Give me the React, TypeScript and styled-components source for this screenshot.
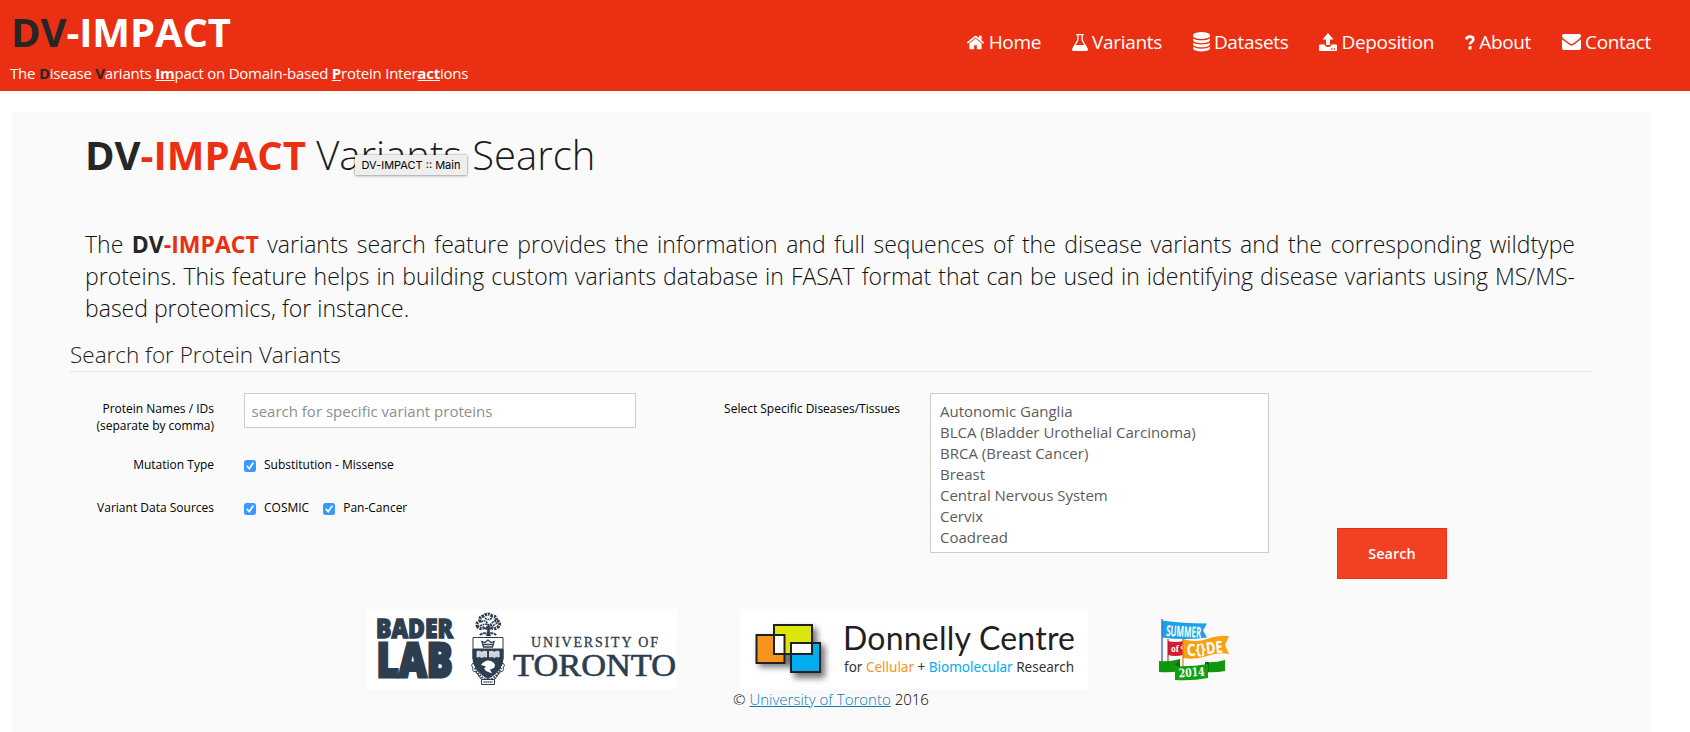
import React from "react";
import styled, { createGlobalStyle } from "styled-components";

const Global = createGlobalStyle`
  * { box-sizing: border-box; }
  body { margin: 0; background: #fff; color: #222; font-family: "Open Sans", sans-serif; overflow: hidden; }
`;

const Page = styled.div`height: 732px; overflow: hidden; position: relative;`;

const Header = styled.header`
  height: 91px;
  background: #eb2f12;
  color: #fff;
  display: flex;
  justify-content: space-between;
  padding: 0 39px 0 10px;
`;
const Brand = styled.div`display: flex; flex-direction: column; padding-top: 5px;`;
const Logo = styled.div`
  font-size: 40px; line-height: 54px; font-weight: 700; padding-left: 1px;
  letter-spacing: -0.1px; white-space: nowrap;
`;
const Dark = styled.b`color: #262626; font-weight: 700;`;
const Red = styled.b`color: #eb2f12; font-weight: 700;`;
const Tagline = styled.div`
  font-size: 15px; line-height: 22px; margin-top: 3px; letter-spacing: -0.23px; white-space: nowrap;
  u { font-weight: 700; }
`;
const Nav = styled.nav`display: flex; align-items: center; height: 84px; gap: 31px;`;
const NavItem = styled.a`
  display: flex; align-items: center; gap: 4px;
  font-size: 19px; line-height: 26px; letter-spacing: -0.33px; white-space: nowrap;
  svg { display: block; fill: #fff; }
`;

const Panel = styled.main`
  margin: 21px 39px 0 11px;
  height: 620px;
  background: #fafafa;
  padding: 16px 60px 0 59px;
`;
const Title = styled.h1`
  margin: 0 0 0 15px; font-size: 40px; line-height: 54px; font-weight: 300; color: #1c1c1c;
`;
const Intro = styled.p`
  margin: 46px 16px 0 15px; font-size: 23px; line-height: 32px; font-weight: 300; text-align: justify; color: #111;
`;
const Legend = styled.h2`
  margin: 12px 0 0; height: 36px; font-size: 22.5px; line-height: 37px; font-weight: 300;
  border-bottom: 1px solid #e5e5e5; color: #222;
`;
const Form = styled.form`display: flex; padding-top: 21px; height: 237px;`;
const Fields = styled.div`display: flex; flex-direction: column; width: 566px;`;
const Row = styled.div<{ $h: number }>`display: flex; height: ${(p) => p.$h}px;`;
const Label = styled.label<{ $w: number }>`
  width: ${(p) => p.$w}px; text-align: right; font-size: 12px; line-height: 17px; padding-top: 7px;
  color: #000; white-space: nowrap; flex: none;
`;
const TextInput = styled.input`
  margin-left: 30px; width: 392px; height: 35px; border: 1px solid #ccc; background: #fff; outline: none;
  padding: 0 6.5px; font: 15px "Open Sans", sans-serif;
  &::placeholder { color: #8e8e8e; opacity: 1; }
`;
const Checks = styled.div`display: flex; margin-left: 30px; gap: 14px;`;
const CheckLabel = styled.label`
  display: flex; font-size: 12px; line-height: 17px; padding-top: 7px; gap: 8px; color: #000; white-space: nowrap;
  svg { margin-top: 4px; display: block; }
`;
const ListBox = styled.div`
  margin-left: 30px; width: 339px; height: 160px; border: 1px solid #ccc; background: #fff;
  padding: 7px 9px; font-size: 15px; line-height: 21px; color: #5c5c5c; overflow: hidden; white-space: nowrap;
`;
const SearchButton = styled.button`
  margin: 135px 0 0 68px; width: 110px; height: 51px; border: 1px solid #eb2f12; background: #f24024; color: #fff;
  font: 600 14.5px "Open Sans", sans-serif; padding: 0;
`;
const Logos = styled.div`
  display: flex; margin: 0 0 0 297px; height: 80px;
  svg { display: block; flex: none; overflow: visible; }
`;
const Copyright = styled.div`
  margin-left: 663px; font-size: 15px; line-height: 21px; font-weight: 300; color: #000; white-space: nowrap;
  a { color: #0b7fb4; text-decoration: underline; }
`;
const Tooltip = styled.div`
  position: absolute; left: 355px; top: 155px; width: 112px; height: 20px; background: #eee;
  box-shadow: 0 0 2px rgba(0,0,0,.35), 0 1px 3px rgba(0,0,0,.25); color: #000;
  font: 11px/20px Inter, sans-serif; text-align: center; white-space: nowrap;
`;

const Check = () => (
  <svg width="12" height="12" viewBox="0 0 12 12">
    <rect width="12" height="12" rx="2.5" fill="#3b99fc" />
    <path d="M3.2 6.3 5.2 8.7 8.9 3.2" fill="none" stroke="#fff" strokeWidth="1.6" strokeLinecap="round" />
  </svg>
);

const HomeIcon = () => (
  <svg width="19" height="19" viewBox="0 0 1792 1792">
    <path d="M1472 992v480q0 26-19 45t-45 19h-384v-384h-256v384h-384q-26 0-45-19t-19-45v-480q0-1 .5-3t.5-3l575-474 575 474q1 2 1 6zm223-69l-62 74q-8 9-21 11h-3q-13 0-21-7l-692-577-692 577q-12 8-24 7-13-2-21-11l-62-74q-8-10-7-23.5t11-21.5l719-599q32-26 76-26t76 26l244 204v-195q0-14 9-23t23-9h192q14 0 23 9t9 23v408l219 182q10 8 11 21.500t-7 23.500z" />
  </svg>
);
const FlaskIcon = () => (
  <svg width="16" height="17" viewBox="0 0 16 17">
    <path d="M4.200 0h7.600v1.300h-1v4.700l4.800 8.200q1.100 2.800-1.400 2.800H1.800Q-.7 17 .4 14.200L5.200 6V1.300h-1zM6.500 1.300v5L3.900 10.900h8.200L9.500 6.300v-5z" fillRule="evenodd" />
  </svg>
);
const DatabaseIcon = () => (
  <svg width="17" height="19.500" viewBox="0 0 1536 1792">
    <path d="M768 768q237 0 443-43t325-127v170q0 69-103 128t-280 93.500-385 34.500-385-34.500-280-93.500-103-128v-170q119 84 325 127t443 43zm0 768q237 0 443-43t325-127v170q0 69-103 128t-280 93.500-385 34.500-385-34.500-280-93.500-103-128v-170q119 84 325 127t443 43zm0-384q237 0 443-43t325-127v170q0 69-103 128t-280 93.500-385 34.500-385-34.500-280-93.500-103-128v-170q119 84 325 127t443 43zm0-1152q208 0 385 34.500t280 93.500 103 128v128q0 69-103 128t-280 93.500-385 34.500-385-34.500-280-93.500-103-128v-128q0-69 103-128t280-93.500 385-34.500z" />
  </svg>
);
const UploadIcon = () => (
  <svg width="18" height="18" viewBox="0 0 18 18">
    <path d="M9 0 14.500 6.500H11V12H7V6.500H3.500zM1 11.500h4.700Q6 14 9 14t3.300-2.500H17q1 0 1 1V17q0 1-1 1H1q-1 0-1-1v-4.500q0-1 1-1zM12 15.300v1.400h1.400v-1.400zm2.700 0v1.400h1.400v-1.400z" fillRule="evenodd" />
  </svg>
);
const QuestionIcon = () => (
  <svg width="10" height="15" viewBox="0 0 10 15">
    <path d="M1.300 4.400Q1.800 1.600 4.900 1.600 8.300 1.600 8.300 4.300 8.300 6 6.500 7.100 5 8 5 9.600" fill="none" stroke="#fff" strokeWidth="2.700" />
    <rect x="3.500" y="11.300" width="3.100" height="3.100" rx=".4" />
  </svg>
);
const MailIcon = () => (
  <svg width="19" height="16" viewBox="0 0 19 16">
    <path d="M1.800 0h15.400Q19 0 19 1.600 19 3.500 17 5l-5.200 3.900Q10.400 10 9.500 10T7.200 8.900L2 5Q0 3.500 0 1.700 0 0 1.800 0zM0 5.300l6.500 5Q8.300 11.600 9.500 11.600t3-1.300L19 5.300V14q0 2-2 2H2q-2 0-2-2z" />
  </svg>
);

const navy = "#2c3e50";

const TorontoLogo = () => (
  <svg width="310" height="80" viewBox="0 0 310 80">
    <rect width="310" height="80" fill="#fff" />
    <g fill={navy} stroke={navy} fontFamily="Open Sans" fontWeight="800" strokeLinejoin="miter">
      <text x="9" y="29.300" fontSize="26.500" strokeWidth="1.400" textLength="77" lengthAdjust="spacingAndGlyphs">BADER</text>
      <text x="9.500" y="67.500" fontSize="47" strokeWidth="3" textLength="76" lengthAdjust="spacingAndGlyphs">LAB</text>
    </g>
    <g fill="none" stroke={navy} strokeWidth="1">
      <path d="M119.500 27q1.500-5 .5-10h3q-1 5 .5 10z" fill={navy} strokeWidth=".5" />
      <path d="M111 18q-3-4 2-6-1-5 4-5 4-4 8 0 5 0 4 4 6 3 2 7-4 3-7 0-3 3-6 0-4 3-7 0z" strokeWidth="3.200" strokeDasharray="2.300 .9" />
      <path d="M114 13q4-3 6 1t6-1q3-2 4 2M113 17q5-3 8-1t8-1M118 9q3 3 7 0" strokeWidth="1.600" strokeDasharray="2 .7" />
      <path d="M113 26q3-3 8-1 5-2 8 1" strokeWidth="2" strokeDasharray="3 .6" />
      <path d="M106 28.500h30V49q0 12-15 21-15-9-15-21z" fill="#fff" />
      <path d="M106 40h30v9q0 12-15 20-15-8-15-20z" fill={navy} />
      <path d="M116.500 38 115 32.500l3 1 3-2.500 3 2.500 3-1-1.500 5.500zM116 35.500h10" strokeWidth="1.300" />
      <path d="M110 42.500q3-1 4.800.8 1.800-1.800 4.800-.8v5.500q-3-1-4.800.5-1.800-1.500-4.800-.5zm12.500 0q3-1 4.800.8 1.800-1.800 4.800-.8v5.500q-3-1-4.800.5-1.800-1.500-4.800-.5z" fill="#cfd4d9" stroke="#fff" strokeWidth=".7" />
      <path d="M114 56q4-6 10-4 6 3 3 7l-4 1.500 2 4-6-2.500-2-2.500 2-2z" fill="#fff" stroke="none" />
      <path d="M106 54q-3 2 0 5-2 3 3 4l5 7q7 4 14 0l5-7q5-1 3-4 3-3 0-5" strokeWidth="1" />
      <path d="M108 59q4 9 13 13 9-4 13-13" strokeWidth="2.200" strokeDasharray="1.600 1.200" />
      <path d="M114.500 70.500h13v5h-13z" fill="#fff" />
      <path d="M116.500 73h9" strokeWidth="1.500" strokeDasharray="1.300 .7" />
    </g>
    <g fill={navy} stroke={navy} strokeWidth=".3" fontFamily="Liberation Serif">
      <text x="164" y="37.500" fontSize="14" textLength="127">UNIVERSITY OF</text>
      <text x="146" y="67" fontSize="31" strokeWidth=".6" textLength="163" lengthAdjust="spacingAndGlyphs">TORONTO</text>
    </g>
  </svg>
);

const DonnellyIcon = styled.svg`margin-left: 64px;`;
const DonnellyLogo = () => (
  <DonnellyIcon width="347" height="80" viewBox="0 0 347 80">
    <defs>
      <filter id="soft" x="-20%" y="-20%" width="150%" height="150%"><feGaussianBlur stdDeviation="3" /></filter>
    </defs>
    <rect width="347" height="80" fill="#fff" />
    <path d="M18 29h18V19h40v17h8v33H53V58H18z" fill="#444" opacity=".75" filter="url(#soft)" />
    <g stroke="#231f20" strokeWidth="2">
      <rect x="15.500" y="26" width="28" height="28" fill="#f7941e" />
      <rect x="33" y="16" width="38" height="29" fill="#dbe60d" />
      <rect x="50" y="34" width="29" height="29" fill="#00aeef" />
      <rect x="33" y="26" width="10.500" height="19" fill="#fff" />
      <rect x="50" y="34" width="21" height="11" fill="#fff" />
    </g>
    <text x="102" y="41" fontFamily="Lato" fontSize="32" fill="#231f20" textLength="232">Donnelly Centre</text>
    <text x="103" y="63" fontFamily="Noto Sans" fontSize="13.500" fill="#333" textLength="230" lengthAdjust="spacingAndGlyphs">
      for <tspan fill="#f7941e">Cellular</tspan> + <tspan fill="#00aeef">Biomolecular</tspan> Research
    </text>
  </DonnellyIcon>
);

const SummerIcon = styled.svg`margin: 10px 0 0 71px;`;
const SummerLogo = () => (
  <SummerIcon width="70" height="62" viewBox="0 0 70 62">
    <path d="M3 1.500q20 3 45 3l-4 7 4 7q-22 3-45 0z" fill="#1ba1e8" />
    <path d="M3 0v43" stroke="#4568c8" strokeWidth="1.400" />
    <path d="M9 22q8 2 15 0v14q-8 2-15 0z" fill="#d51c30" />
    <path d="M9 20v24" stroke="#b01830" strokeWidth="1" />
    <path d="M24 20q12 4 24 0t22-3l-4 9 4 9q-10-2-22 2t-24 2z" fill="#f9a013" />
    <path d="M24 20v28" stroke="#d87f10" strokeWidth="1.200" />
    <path d="M0 42q11 1 21-2v12q-10 2-21 1zM46 43q10 1 20-2v11q-10 2-20 1z" fill="#10960f" />
    <path d="M16 46 21 40v10zM46 43h4v9l-4 4z" fill="#087008" />
    <path d="M16 47q16 1 33-2v14q-15 3-33 2z" fill="#119f12" />
    <g fill="#fff" fontWeight="700">
      <text x="7" y="17" fontFamily="Open Sans" fontSize="15" textLength="35" lengthAdjust="spacingAndGlyphs" transform="rotate(3 7 17)">SUMMER</text>
      <text x="12" y="32.500" fontFamily="Liberation Serif" fontSize="9.500">of</text>
      <text x="21.200" y="30.500" fontFamily="Open Sans" fontSize="8">‹</text>
      <g fontFamily="Open Sans" fontSize="16.500">
        <text x="28" y="37" textLength="9" lengthAdjust="spacingAndGlyphs" transform="rotate(-3 28 37)">C</text>
        <text x="37" y="35.500" fontSize="14.500" textLength="10" lengthAdjust="spacingAndGlyphs" transform="rotate(-5 37 35.500)">{"{}"}</text>
        <text x="47.500" y="35.300" textLength="17" lengthAdjust="spacingAndGlyphs" transform="rotate(-6 47.500 35.300)">DE</text>
      </g>
      <text x="20" y="58.500" fontFamily="DejaVu Serif" fontSize="12" textLength="26" lengthAdjust="spacingAndGlyphs" transform="rotate(-4 20 58.500)">2014</text>
    </g>
  </SummerIcon>
);

const diseases = ["Autonomic Ganglia", "BLCA (Bladder Urothelial Carcinoma)", "BRCA (Breast Cancer)", "Breast", "Central Nervous System", "Cervix", "Coadread"];

export default function App() {
  return (
    <Page>
      <Global />
      <Header>
        <Brand>
          <Logo><Dark>DV</Dark>-IMPACT</Logo>
          <Tagline>The <Dark>D</Dark>isease <Dark>V</Dark>ariants <u>Im</u>pact on Domain-based <u>P</u>rotein Inter<u>act</u>ions</Tagline>
        </Brand>
        <Nav>
          <NavItem><HomeIcon />Home</NavItem>
          <NavItem><FlaskIcon />Variants</NavItem>
          <NavItem><DatabaseIcon />Datasets</NavItem>
          <NavItem><UploadIcon />Deposition</NavItem>
          <NavItem><QuestionIcon />About</NavItem>
          <NavItem><MailIcon />Contact</NavItem>
        </Nav>
      </Header>
      <Panel>
        <Title><Dark>DV</Dark><Red>-IMPACT</Red> Variants Search</Title>
        <Intro>
          The <Dark>DV</Dark><Red>-IMPACT</Red> variants search feature provides the information and full sequences of the disease variants and the corresponding wildtype proteins. This feature helps in building custom variants database in FASAT format that can be used in identifying disease variants using MS/MS-based proteomics, for instance.
        </Intro>
        <Legend>Search for Protein Variants</Legend>
        <Form>
          <Fields>
            <Row $h={56}>
              <Label $w={144}>Protein Names / IDs<br />(separate by comma)</Label>
              <TextInput placeholder="search for specific variant proteins" />
            </Row>
            <Row $h={43}>
              <Label $w={144}>Mutation Type</Label>
              <Checks><CheckLabel><Check />Substitution - Missense</CheckLabel></Checks>
            </Row>
            <Row $h={43}>
              <Label $w={144}>Variant Data Sources</Label>
              <Checks>
                <CheckLabel><Check />COSMIC</CheckLabel>
                <CheckLabel><Check />Pan-Cancer</CheckLabel>
              </Checks>
            </Row>
          </Fields>
          <Label $w={264}>Select Specific Diseases/Tissues</Label>
          <ListBox>{diseases.map((d) => <div key={d}>{d}</div>)}</ListBox>
          <SearchButton type="button">Search</SearchButton>
        </Form>
        <Logos><TorontoLogo /><DonnellyLogo /><SummerLogo /></Logos>
        <Copyright>© <a>University of Toronto</a> 2016</Copyright>
      </Panel>
      <Tooltip>DV-IMPACT :: Main</Tooltip>
    </Page>
  );
}
